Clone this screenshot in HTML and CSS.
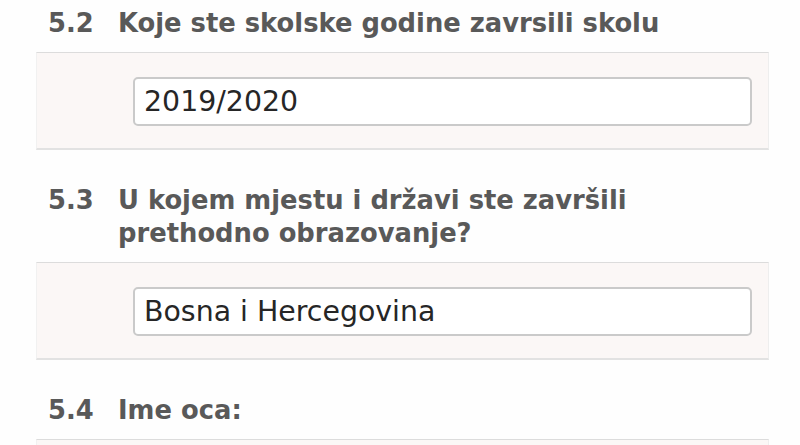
FILE: index.html
```html
<!DOCTYPE html>
<html lang="bs">
<head>
<meta charset="utf-8">
<title>Obrazac</title>
<link rel="stylesheet" href="styles.css">
</head>
<body>
<div class="page">
  <div class="q q-first">
    <span class="num">5.2</span>
    <span class="txt">Koje ste skolske godine zavrsili skolu</span>
  </div>
  <div class="panel">
    <div class="field">2019/2020</div>
  </div>

  <div class="q">
    <span class="num">5.3</span>
    <span class="txt">U kojem mjestu i državi ste završili<br>prethodno obrazovanje?</span>
  </div>
  <div class="panel">
    <div class="field">Bosna i Hercegovina</div>
  </div>

  <div class="q">
    <span class="num">5.4</span>
    <span class="txt">Ime oca:</span>
  </div>
  <div class="panel panel-last"></div>
</div>
</body>
</html>
```
FILE: styles.css
```css
html, body {
  margin: 0;
  padding: 0;
  background: #fefefe;
}
.page {
  width: 800px;
  height: 445px;
  overflow: hidden;
  padding-top: 7px;
  box-sizing: border-box;
  font-family: "DejaVu Sans", "Liberation Sans", sans-serif;
}
.q {
  display: flex;
  padding-left: 48px;
  margin-top: 34px;
  margin-bottom: 12px;
  font-size: 25.8px;
  line-height: 33px;
  font-weight: bold;
  color: #595959;
}
.q-first {
  margin-top: 0;
}
.num {
  width: 70px;
  flex: none;
}
.panel {
  margin-left: 36px;
  width: 733px;
  box-sizing: border-box;
  background: #fbf7f6;
  border-top: 1px solid #dcdcdc;
  border-bottom: 2px solid #e2e2e2;
  border-left: 1px solid #f1f1f1;
  border-right: 1px solid #eeeeee;
  padding: 24px 16px 22px 96px;
}
.panel-last {
  height: 60px;
}
.field {
  height: 49px;
  box-sizing: border-box;
  border: 2px solid #cacaca;
  border-radius: 5px;
  background: #ffffff;
  padding-left: 9px;
  font-size: 28.4px;
  line-height: 45px;
  color: #262626;
}
```
